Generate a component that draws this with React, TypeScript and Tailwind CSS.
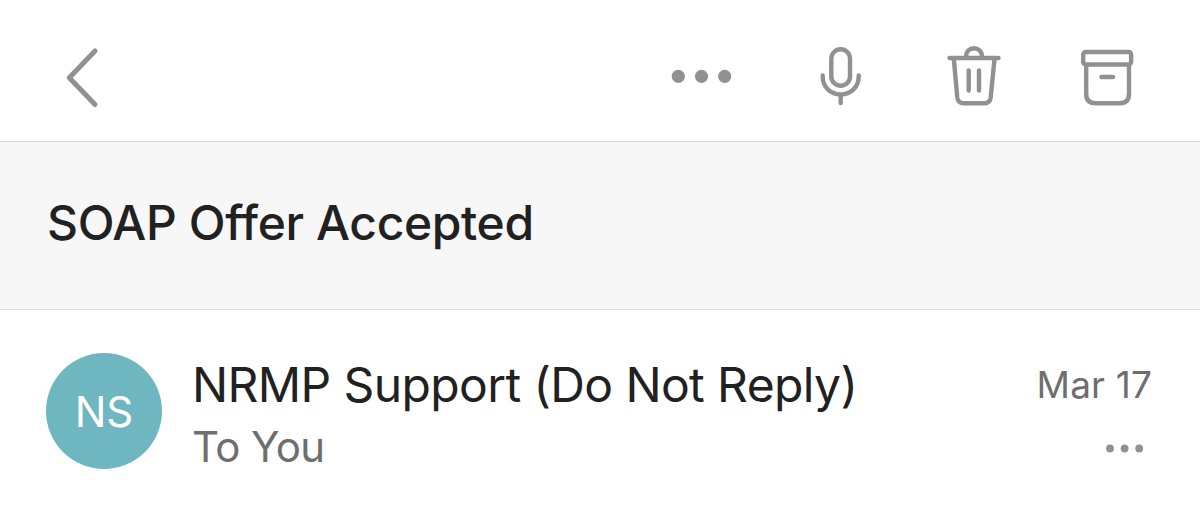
export default function App() {
  return (
    <div className="h-[521px] w-[1200px] overflow-hidden bg-white font-['Inter',sans-serif]">
      <header className="flex h-[142px] items-start justify-between border-b border-[#d5d5d5] pt-9 pr-[52px] pl-[52px]">
        <svg width="60" height="80" viewBox="52 36 60 80" fill="none" stroke="#919191" strokeWidth="5">
          <path d="M95 51L69.300 77.700L95 104.500" strokeLinecap="round" strokeLinejoin="round" />
        </svg>
        <svg width="488" height="80" viewBox="660 36 488 80" fill="none" stroke="#919191" strokeWidth="4.400" strokeLinecap="round" strokeLinejoin="round">
          <g fill="#919191" stroke="none">
            <circle cx="678.300" cy="76.300" r="6.600" />
            <circle cx="701.500" cy="76.300" r="6.600" />
            <circle cx="724.700" cy="76.300" r="6.600" />
          </g>
          <rect x="831.300" y="49.300" width="18.700" height="36.500" rx="9.350" />
          <path d="M822.700 75.500V76.500C822.700 87 830.500 94.500 840.700 94.500S858.700 87 858.700 76.500V75.500M840.700 95V103" />
          <path d="M949.500 58H998.500M966 57C966 45.300 982 45.300 982 57M953.800 59L957.300 97.500Q958 103.200 963.500 103.200H984.500Q990 103.200 990.700 97.500L994.500 59M968.700 70.500V90.500M979 70.500V90.500" />
          <rect x="1083.200" y="52" width="47.900" height="12.500" rx="2.500" />
          <path d="M1086.200 65V94Q1086.200 103.200 1095.400 103.200H1119.800Q1129 103.200 1129 94V65M1101.500 77H1113" />
        </svg>
      </header>
      <section className="flex h-[168px] items-start border-b border-[#dedede] bg-[#f7f7f7] pt-[51px] pl-[47px]">
        <h1 className="text-[48px] leading-[60px] font-medium tracking-[-0.38px] text-[#212121]">SOAP Offer Accepted</h1>
      </section>
      <main className="flex pt-[43px] pr-[48px] pl-[46px]">
        <div className="flex size-[116px] items-center justify-center rounded-full bg-[#6eb7c1] text-[42px] text-white">NS</div>
        <div className="ml-[30px] flex-1 whitespace-nowrap">
          <div className="text-[48px] leading-[64px] tracking-[-0.61px] text-[#212121]">NRMP Support (Do Not Reply)</div>
          <div className="text-[42px] leading-[59px] tracking-[-0.6px] text-[#6e6e6e]">To You</div>
        </div>
        <div className="flex flex-col items-end">
          <time className="text-[37px] leading-[64px] tracking-[0.15px] text-[#6e6e6e]">Mar 17</time>
          <svg className="mt-[21px]" width="50" height="20" viewBox="1102 438.500 50 20" fill="#919191">
            <circle cx="1110" cy="449" r="3.900" />
            <circle cx="1124.600" cy="449" r="3.900" />
            <circle cx="1139.200" cy="449" r="3.900" />
          </svg>
        </div>
      </main>
    </div>
  );
}
